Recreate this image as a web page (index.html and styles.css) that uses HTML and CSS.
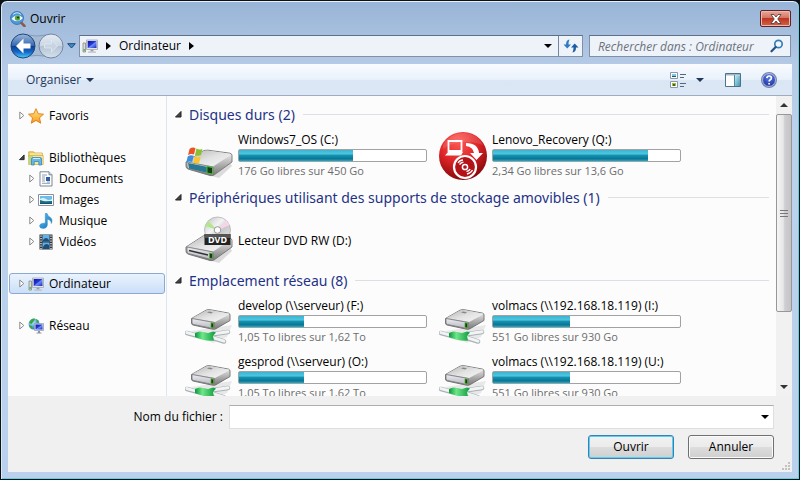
FILE: index.html
```html
<!DOCTYPE html>
<html lang="fr">
<head>
<meta charset="utf-8">
<title>Ouvrir</title>
<link rel="stylesheet" href="styles.css">
</head>
<body>
<svg class="defs" aria-hidden="true">
  <defs>
    <linearGradient id="screen" x1="0" y1="0" x2="1" y2="1"><stop offset="0" stop-color="#0a14a0"/><stop offset=".45" stop-color="#2438d8"/><stop offset=".55" stop-color="#6f8cf5"/><stop offset="1" stop-color="#1a28c0"/></linearGradient>
    <linearGradient id="star" x1="0" y1="0" x2="0" y2="1"><stop offset="0" stop-color="#ffe88a"/><stop offset="1" stop-color="#f79a1c"/></linearGradient>
    <linearGradient id="note" x1="0" y1="0" x2="1" y2="1"><stop offset="0" stop-color="#5cc0f0"/><stop offset="1" stop-color="#1470bc"/></linearGradient>
    <linearGradient id="drivetop" x1="0" y1="0" x2="1" y2="1"><stop offset="0" stop-color="#b4b4b4"/><stop offset=".5" stop-color="#e2e2e2"/><stop offset="1" stop-color="#f8f8f8"/></linearGradient>
    <linearGradient id="driveside" x1="0" y1="0" x2="0" y2="1"><stop offset="0" stop-color="#fafafa"/><stop offset="1" stop-color="#777"/></linearGradient>
    <linearGradient id="drivefront" x1="0" y1="0" x2="0" y2="1"><stop offset="0" stop-color="#eceef4"/><stop offset="1" stop-color="#b5b5bd"/></linearGradient>
    <linearGradient id="cable" x1="0" y1="0" x2="1" y2="0"><stop offset="0" stop-color="#08983a"/><stop offset=".35" stop-color="#6fe68a"/><stop offset="1" stop-color="#0a9a3c"/></linearGradient>
    <linearGradient id="disc" x1="0" y1="0" x2="1" y2="1"><stop offset="0" stop-color="#bdbdbd"/><stop offset=".4" stop-color="#f4f4f4"/><stop offset=".6" stop-color="#c9c9c9"/><stop offset="1" stop-color="#e9e9e9"/></linearGradient>
    <linearGradient id="pane" x1="0" y1="0" x2="1" y2="1"><stop offset="0" stop-color="#bfe8f0"/><stop offset="1" stop-color="#4496b4"/></linearGradient>
    <radialGradient id="red" cx=".4" cy=".2" r=".85"><stop offset="0" stop-color="#ff5a55"/><stop offset=".5" stop-color="#dd2427"/><stop offset="1" stop-color="#7a0608"/></radialGradient>
    <radialGradient id="help" cx=".5" cy=".3" r=".8"><stop offset="0" stop-color="#5a7ee8"/><stop offset="1" stop-color="#10208c"/></radialGradient>
    <radialGradient id="globe" cx=".35" cy=".3" r=".8"><stop offset="0" stop-color="#b8f0ff"/><stop offset="1" stop-color="#1468b8"/></radialGradient>
    <linearGradient id="navblue" x1="0" y1="0" x2="0" y2="1"><stop offset="0" stop-color="#9db8dc"/><stop offset=".48" stop-color="#3468b0"/><stop offset=".5" stop-color="#0c3c8c"/><stop offset=".75" stop-color="#1468c8"/><stop offset="1" stop-color="#48d0ff"/></linearGradient>
    <linearGradient id="navgrey" x1="0" y1="0" x2="0" y2="1"><stop offset="0" stop-color="#e4ebf4"/><stop offset=".48" stop-color="#ccd7e4"/><stop offset=".5" stop-color="#b3c2d3"/><stop offset="1" stop-color="#d6e1ec"/></linearGradient>
  </defs>
  <symbol id="i-closed" viewBox="0 0 6 9"><path d="M.8 1v7l4-3.500z" fill="#fff" stroke="#8a8a8a"/></symbol>
  <symbol id="i-opened" viewBox="0 0 7 7"><path d="M6 .5V6H.5z" fill="#444" stroke="#222"/></symbol>
  <symbol id="i-down" viewBox="0 0 8 4"><path d="M0 0h8L4 4z" fill="currentColor"/></symbol>
  <symbol id="i-right" viewBox="0 0 5 8"><path d="M0 0v8l5-4z" fill="#000"/></symbol>
  <symbol id="i-computer" viewBox="0 0 16 16">
    <path d="M1 5h2.500v9H1z" fill="#d8dcd4" stroke="#858a85" stroke-width=".8"/><path d="M1.400 11h1.500v2H1.400z" fill="#5cb84a"/>
    <path d="M4.500 2h11v9.500h-11z" fill="#e0e4ea" stroke="#a3a8b2" stroke-width=".8"/><path d="M5.700 3h8.800v7H5.700z" fill="url(#screen)"/>
    <path d="M8.500 11.800h3v1.700h-3z" fill="#9aa0a8"/><path d="M6 13.500h8v1.200H6z" fill="#b9bec6"/>
  </symbol>
  <symbol id="i-star" viewBox="0 0 16 16"><path d="M8 .7l2.200 5 5.300.5-4 3.600 1.200 5.400L8 12.400l-4.700 2.800 1.200-5.400-4-3.600 5.300-.5z" fill="url(#star)" stroke="#dc7a10" stroke-width=".9"/></symbol>
  <symbol id="i-library" viewBox="0 0 16 16">
    <path d="M.7 3V1.800h5l1 1.200h7.600v4H.7z" fill="#f0d064" stroke="#c79f35" stroke-width=".7"/><path d="M2 4h12" stroke="#fff5bf"/>
    <path d="M.6 5.500h14.600v9H.6z" fill="#f7e69b" stroke="#cfae4a" stroke-width=".7"/><path d="M1 6h4v8H1z" fill="#b9d77c"/>
    <path d="M3.500 15V9q0-1.500 1.500-1.500h7q1.500 0 1.500 1.500v6h-2.700v-3.500H6.200V15z" fill="#6ab8e6" stroke="#3586bc" stroke-width=".8"/><path d="M5 8.500h7" stroke="#cdecff"/>
  </symbol>
  <symbol id="i-doc" viewBox="0 0 16 16">
    <path d="M2 .8h9l3 3V15H2z" fill="#fff" stroke="#7c8691"/><path d="M11 .8v3h3" fill="#dce3ea" stroke="#7c8691"/>
    <path d="M4 4h5M4 6h3M4 8h3M4 10h3M4 12.300h8M9 11h3" stroke="#8a9db5"/><path d="M8 6h4v4H8z" fill="#2f5ca8"/>
  </symbol>
  <symbol id="i-image" viewBox="0 0 16 16">
    <path d="M.5 2.500h15v11H.5z" fill="#fff" stroke="#8793a0"/><path d="M2 4h12v8H2z" fill="#6dbbe8"/><path d="M2 7q3-2 6 0t6 0v2H2z" fill="#d7f1fb"/><path d="M2 8l5 1.500L14 9v3H2z" fill="#1c7070"/><path d="M2 11h12v1H2z" fill="#174a8c"/>
  </symbol>
  <symbol id="i-music" viewBox="0 0 16 16"><path d="M7.300.5h1.800q.4 2.500 3 3.800 3 2 1.200 6.200.2-3.400-4-4.500v6.200q-.4 3-4 3.200-3.600 0-3.700-2.500.4-3 5.700-2.700z" fill="url(#note)" stroke="#2a82bd" stroke-width=".5"/></symbol>
  <symbol id="i-video" viewBox="0 0 16 16">
    <path d="M1.500.5h13v15h-13z" fill="#30363c"/><path d="M4.500 1h7v6.500h-7zM4.500 8.500h7v6.500h-7z" fill="#62b2e5"/><path d="M5 6q3-4 6 0v1.500H5zM5 13q2-5 6-2v4H5z" fill="#1e4e78"/>
    <path d="M3 1.500v14M13 1.500v14" stroke="#f5f5f5" stroke-width="1.300" stroke-dasharray="1.300 1.200"/>
  </symbol>
  <symbol id="i-network" viewBox="0 0 16 16">
    <circle cx="6" cy="6" r="5.500" fill="url(#globe)"/><path d="M2 3q2-3 5-2.300L6 3 3.500 6 1 5zM1 7l3 1 1 3-3-1zM8 1l3 2-2 2z" fill="#3ba545"/>
    <path d="M6.500 5.500h9v7h-9z" fill="#d9e0ea" stroke="#8c9ab2" stroke-width=".7"/><path d="M7.500 6.500h7v5h-7z" fill="url(#screen)"/><path d="M10 13h2v1.500h-2zM8.500 14.500h5v1h-5z" fill="#8d939c"/>
  </symbol>
  <symbol id="drive" viewBox="0 0 48 34">
    <path d="M4 25l30 8 13-12-4-7z" fill="#000" opacity=".13"/>
    <path d="M1 17L18 6q2-1 5-.8l22 3q2 .6 2 2.200v6.600L29 30q-2 1-4 .5L3 24q-2-.6-2-3z" fill="url(#driveside)" stroke="#747474" stroke-width=".9"/>
    <path d="M2 16.500L18 6.500q2-1 5-.8l22 3q1.500.6.300 1.600L28 21.500z" fill="url(#drivetop)"/>
    <path d="M2 17l26 5v8L3.500 23.500Q2 23 2 21z" fill="url(#drivefront)" stroke="#777" stroke-width=".8"/>
    <path d="M24.500 23l3 .7v5l-3-.7z" fill="#173d12" stroke="#55a635" stroke-width=".8"/>
  </symbol>
  <symbol id="i-windrive" viewBox="0 0 48 34">
    <use href="#drive" width="48" height="34"/><path d="M3 18l20 4v6L4 23.500z" fill="#2a7792"/><path d="M22 21.500l5.500 1v6.500l-5.500-1z" fill="#143e18" stroke="#4cb83a"/>
    <path d="M4.500 4q3-2.500 6-.8L9 9.500q-3-1.500-6 .8z" fill="#ea5326"/><path d="M11.500 3.500q3 2 6 .2L16 10q-3 1.500-6-.2z" fill="#89bf31"/><path d="M2.700 11.500q3-2.200 6-.7L7.200 17q-3-1.500-6 .7z" fill="#3e8ede"/><path d="M9.700 11.200q3 1.800 6 .2L14.200 17.700q-3 1.600-6-.2z" fill="#f9c52b"/>
  </symbol>
  <symbol id="i-netdrive" viewBox="0 0 48 36">
    <path d="M6 22l22 12 14-6 5-12z" fill="#000" opacity=".08"/>
    <path d="M6.500 9.500L21 1.200q2-.8 4-.5l18.500 3.400q1.500.5 1.500 1.900v5.500L31 19.700q-1.500.9-3.500.5L8 16q-1.500-.4-1.500-2z" fill="url(#driveside)" stroke="#6f6f6f" stroke-width=".9"/>
    <path d="M7.500 9L21 1.600q2-.8 4-.5l18.500 3.400q1.200.5.200 1.200L30 13z" fill="url(#drivetop)"/>
    <path d="M7 9.500L29.500 13.500v6.400L8.500 15.500Q7 15 7 13.500z" fill="url(#drivefront)" stroke="#777" stroke-width=".8"/>
    <path d="M26 13.800l2.600.5v4.600l-2.600-.5z" fill="#173d12" stroke="#55a635" stroke-width=".8"/>
    <path d="M24 2.500l4 .7-2 1.200-4-.8z" fill="#888"/>
    <path d="M2 24l11 3M28 29l11 3.500M29 25l14-2" fill="none" stroke="#a9b0b4" stroke-width="4.500" stroke-linecap="round"/>
    <path d="M2 23.600l11 3M28 28.600l11 3.500M29 24.700l14-2" fill="none" stroke="#f1f4f5" stroke-width="3" stroke-linecap="round"/>
    <path d="M10 24q4-2.500 8-1l5 1 5-1.500 3 1-3 3.500 1 4.500q-10 1-19-3.500z" fill="url(#cable)"/>
  </symbol>
  <symbol id="i-recovery" viewBox="0 0 48 48">
    <circle cx="24" cy="24" r="24" fill="url(#red)"/><path d="M4 13Q12 0 25 1q13 0 19 12-22-8-40 4z" fill="#fff" opacity=".13"/>
    <g fill="none" stroke="#fff"><path d="M9.500 9h13v10h-13z" stroke-width="1.800"/><path d="M9 20l-3 3.500h16l2-3.500z" fill="#fff" stroke="none"/><circle cx="26" cy="35" r="11" stroke-width="2.200" fill="#b31318"/><circle cx="26" cy="35" r="2.600" stroke-width="1.500"/><path d="M19 31q2-3 5-3M20.500 32.500q1.500-2 4-2.300M28 42q4-1 5.500-4M27.500 39.700q2.500-.7 3.700-2.500" stroke-width="1.300"/></g>
    <path d="M27 11q12 0 13 10h4l-6.500 7-6.500-7h4q-1-6-8-7z" fill="#fff"/>
  </symbol>
</svg>

<main class="window">
  <header class="titlebar">
    <svg class="app-icon" viewBox="0 0 16 16"><circle cx="7" cy="7" r="6.500" fill="#4c98dc" stroke="#2a64a8" stroke-width=".7"/><path d="M1.500 8Q7 1 13 7q-5 6-11.500 1z" fill="#f4fbff"/><circle cx="7.500" cy="7" r="2.700" fill="#5ca53c"/><circle cx="8" cy="6.500" r="1.100" fill="#143c20"/><path d="M3 3.500Q7 0 11 3.500" stroke="#c8e8ff" fill="none"/><path d="M11.500 12l3 3" stroke="#865d54" stroke-width="2.500" stroke-linecap="round"/></svg>
    <h1>Ouvrir</h1>
    <button class="close" aria-label="Fermer"><svg viewBox="0 0 12 10"><path d="M1 .5h3L6 3 8 .5h3L7.800 5 11 9.500H8L6 7 4 9.500H1L4.200 5z" fill="#fff" stroke="#4d3434" stroke-width=".8"/></svg></button>
  </header>

  <nav class="navbar" aria-label="Adresse">
    <div class="history">
      <svg class="history-shape" viewBox="0 0 54 26" aria-hidden="true"><path d="M13 1.500q14 3 28 0v23q-14-4-28 0z" fill="#a5bad4" stroke="#849bb9"/></svg>
      <button aria-label="Précédent"><svg viewBox="0 0 26 26"><circle cx="13" cy="13" r="12" fill="url(#navblue)" stroke="#234575"/><path d="M13.500 5.500L6 13l7.500 7.500v-5h7v-5h-7z" fill="#fff"/></svg></button>
      <button aria-label="Suivant"><svg viewBox="0 0 26 26"><circle cx="13" cy="13" r="12" fill="url(#navgrey)" stroke="#7286a0"/><path d="M13.500 7l6 6-6 6v-4h-7v-4h7z" fill="#c8d4e1" stroke="#e2eaf2" stroke-width=".8"/></svg></button>
    </div>
    <button class="recent" aria-label="Pages récentes"><svg viewBox="0 0 9 6"><path d="M.7.700h7.600L4.500 5z" fill="#3c8ed0" stroke="#1d4678"/></svg></button>
    <div class="address">
      <svg class="icon"><use href="#i-computer"/></svg>
      <svg class="crumb-arrow"><use href="#i-right"/></svg>
      <a href="#ordinateur">Ordinateur</a>
      <svg class="crumb-arrow"><use href="#i-right"/></svg>
      <button class="drop" aria-label="Emplacements précédents"><svg><use href="#i-down"/></svg></button>
      <button class="refresh" aria-label="Actualiser"><svg viewBox="0 0 16 16"><path d="M6.500 1.500Q3 2 3 6.500H.5L4.300 10.500 8 6.500H5.500q0-3 1-5z" fill="#2f7cc4"/><path d="M9.500 14.500q3.500-.5 3.500-5h2.500L11.700 5.500 8 9.500h2.500q0 3-1 5z" fill="#1c5ca4"/></svg></button>
    </div>
    <div class="search">
      <input type="search" aria-label="Rechercher" placeholder="Rechercher dans : Ordinateur">
      <svg viewBox="0 0 14 14"><circle cx="8.500" cy="5" r="3.700" fill="#eef7fd" stroke="#377db8" stroke-width="1.700"/><path d="M5.700 8L1.500 12.300" stroke="#294f88" stroke-width="2.200" stroke-linecap="round"/></svg>
    </div>
  </nav>

  <section class="panel">
    <div class="toolbar">
      <button class="organise">Organiser <svg><use href="#i-down"/></svg></button>
      <button class="view" aria-label="Affichage"><svg viewBox="0 0 16 16"><path d="M.5.5h7v6h-7zM.5 9.500h7v6h-7z" fill="#fff" stroke="#8898ad"/><path d="M2 2h4v3H2z" fill="#7cc4e8"/><path d="M2 4h4v1H2z" fill="#205c58"/><path d="M2 11h4v3H2z" fill="#a9b832"/><path d="M3 12h2v2H3z" fill="#3d6420"/><path d="M10 2.500h6M10 5.500h4M10 11.500h6M10 14.500h4" stroke="#55677e"/></svg></button>
      <button class="view-drop" aria-label="Plus d’options"><svg><use href="#i-down"/></svg></button>
      <button class="preview" aria-label="Volet de visualisation"><svg viewBox="0 0 16 14"><path d="M.5.5h15v13H.5z" fill="#fff" stroke="#4f7386"/><path d="M1 1h14v1.500H1z" fill="#9cb6c8"/><path d="M10 2.500h5V13h-5z" fill="url(#pane)"/><path d="M9.500 2v11" stroke="#4f8aa0"/></svg></button>
      <button class="help" aria-label="Aide"><svg viewBox="0 0 16 16"><circle cx="8" cy="8" r="7.300" fill="url(#help)" stroke="#7785b0" stroke-width="1.400"/><circle cx="8" cy="8" r="6.400" fill="none" stroke="#dce5fa" stroke-width=".7"/><path d="M5.800 6.200Q6 4 8.200 4t2.200 2Q10.400 7.200 9 8q-.9.500-.9 1.600M8.100 11v1.500" fill="none" stroke="#fff" stroke-width="1.700"/></svg></button>
    </div>

    <div class="browser">
      <nav class="tree" aria-label="Dossiers">
        <ul>
          <li><a href="#favoris"><svg class="twist"><use href="#i-closed"/></svg><svg class="icon"><use href="#i-star"/></svg>Favoris</a></li>
        </ul>
        <ul>
          <li><a href="#bibliotheques"><svg class="twist"><use href="#i-opened"/></svg><svg class="icon"><use href="#i-library"/></svg>Bibliothèques</a>
            <ul class="children">
              <li><a href="#documents"><svg class="twist"><use href="#i-closed"/></svg><svg class="icon"><use href="#i-doc"/></svg>Documents</a></li>
              <li><a href="#images"><svg class="twist"><use href="#i-closed"/></svg><svg class="icon"><use href="#i-image"/></svg>Images</a></li>
              <li><a href="#musique"><svg class="twist"><use href="#i-closed"/></svg><svg class="icon"><use href="#i-music"/></svg>Musique</a></li>
              <li><a href="#videos"><svg class="twist"><use href="#i-closed"/></svg><svg class="icon"><use href="#i-video"/></svg>Vidéos</a></li>
            </ul>
          </li>
        </ul>
        <ul>
          <li><a class="selected" href="#ordinateur" aria-current="true"><svg class="twist"><use href="#i-closed"/></svg><svg class="icon"><use href="#i-computer"/></svg>Ordinateur</a></li>
        </ul>
        <ul>
          <li><a href="#reseau"><svg class="twist"><use href="#i-closed"/></svg><svg class="icon"><use href="#i-network"/></svg>Réseau</a></li>
        </ul>
      </nav>

      <div class="files" id="ordinateur">
        <h2><svg class="twist"><use href="#i-opened"/></svg>Disques durs (2)</h2>
        <div class="drives">
          <article class="drive"><svg class="pic"><use href="#i-windrive" y="13" height="34"/></svg><div class="info"><h3>Windows7_OS (C:)</h3><div class="gauge"><div class="used" style="width:61%"></div></div><p>176 Go libres sur 450 Go</p></div></article>
          <article class="drive"><svg class="pic"><use href="#i-recovery"/></svg><div class="info"><h3>Lenovo_Recovery (Q:)</h3><div class="gauge"><div class="used" style="width:83%"></div></div><p>2,34 Go libres sur 13,6 Go</p></div></article>
        </div>
        <h2><svg class="twist"><use href="#i-opened"/></svg>Périphériques utilisant des supports de stockage amovibles (1)</h2>
        <div class="drives">
          <article class="drive plain">
            <svg class="pic" viewBox="0 0 48 48">
              <use href="#drive" y="15" width="48" height="34"/><path d="M4 35.500l19 4.500" stroke="#333" stroke-width="1.600"/>
              <circle cx="32.500" cy="15" r="13" fill="url(#disc)" stroke="#a9a9a9" stroke-width=".7"/><path d="M32.500 15L20 11l3-5z" fill="#b2e68d"/><path d="M32.500 15L41 5l4 5z" fill="#f4d6e8"/><circle cx="32.500" cy="15" r="3.300" fill="#fff" stroke="#999"/>
              <path d="M19.500 19h26v11h-26z" fill="#222"/><path d="M19.500 19h26v4h-26z" fill="#555"/>
              <text x="32.500" y="28" text-anchor="middle" class="dvd-text">DVD</text>
            </svg>
            <div class="info"><h3>Lecteur DVD RW (D:)</h3></div>
          </article>
        </div>
        <h2><svg class="twist"><use href="#i-opened"/></svg>Emplacement réseau (8)</h2>
        <div class="drives">
          <article class="drive"><svg class="pic"><use href="#i-netdrive" y="11" height="36"/></svg><div class="info"><h3>develop (\\serveur) (F:)</h3><div class="gauge"><div class="used" style="width:35%"></div></div><p>1,05 To libres sur 1,62 To</p></div></article>
          <article class="drive"><svg class="pic"><use href="#i-netdrive" y="11" height="36"/></svg><div class="info"><h3>volmacs (\\192.168.18.119) (I:)</h3><div class="gauge"><div class="used" style="width:41%"></div></div><p>551 Go libres sur 930 Go</p></div></article>
          <article class="drive"><svg class="pic"><use href="#i-netdrive" y="11" height="36"/></svg><div class="info"><h3>gesprod (\\serveur) (O:)</h3><div class="gauge"><div class="used" style="width:35%"></div></div><p>1,05 To libres sur 1,62 To</p></div></article>
          <article class="drive"><svg class="pic"><use href="#i-netdrive" y="11" height="36"/></svg><div class="info"><h3>volmacs (\\192.168.18.119) (U:)</h3><div class="gauge"><div class="used" style="width:41%"></div></div><p>551 Go libres sur 930 Go</p></div></article>
        </div>
      </div>

      <div class="scrollbar" aria-hidden="true">
        <svg class="arrow" viewBox="0 0 8 4"><path d="M0 4h8L4 0z" fill="#333"/></svg>
        <div class="track"><div class="thumb"><svg viewBox="0 0 8 8"><path d="M0 1.500h8M0 4.500h8M0 7.500h8" stroke="#777"/></svg></div></div>
        <svg class="arrow" viewBox="0 0 8 4"><path d="M0 0h8L4 4z" fill="#333"/></svg>
      </div>
    </div>

    <form class="footer">
      <div class="filename">
        <label for="nom">Nom du fichier :</label>
        <div class="combo"><input id="nom" type="text"><button type="button" aria-label="Fichiers récents"><svg><use href="#i-down"/></svg></button></div>
      </div>
      <div class="actions">
        <button type="button" class="push default">Ouvrir</button>
        <button type="button" class="push">Annuler</button>
      </div>
      <svg class="grip" viewBox="0 0 9 9" aria-hidden="true"><path d="M7 0h2v2H7zM7 3h2v2H7zM7 6h2v2H7zM4 3h2v2H4zM4 6h2v2H4zM1 6h2v2H1z" fill="#c2c2c2"/></svg>
    </form>
  </section>
</main>
</body>
</html>
```
FILE: styles.css
```css
* { box-sizing: border-box; }

body {
  margin: 0;
  background: #0b1218;
  font: 12px/16px "Open Sans", "Noto Sans", sans-serif;
  color: #000;
}

h1, h2, h3, p, ul { margin: 0; padding: 0; font-weight: normal; }
h1, h3 { font-size: 12px; }
ul { list-style: none; }
a { color: inherit; text-decoration: none; }
svg { display: block; flex: none; }
input { font: inherit; min-width: 0; outline: none; }

button {
  display: flex;
  align-items: center;
  justify-content: center;
  padding: 0;
  border: 0;
  background: none;
  font: inherit;
  color: inherit;
}

.defs { position: absolute; width: 0; height: 0; }
.icon { width: 16px; height: 16px; }
.dvd-text { font: bold 9px "Noto Sans", sans-serif; fill: #fff; }

.window {
  display: flex;
  flex-direction: column;
  height: 100vh;
  padding: 0 7px 7px;
  border: 1px solid #0b1218;
  border-radius: 7px 7px 0 0;
  background: linear-gradient(#98b4d6, #b4cae6 64px, #bbd2ec 130px, #b9d1ec);
  box-shadow: inset 0 1px #e8f1fa, inset 1px 0 #dce9f6, inset -1px -1px #5fd0e2;
}

/* title bar */
.titlebar { display: flex; align-items: center; gap: 4px; height: 33px; padding: 2px 1px 0 2px; }
.titlebar h1 { flex: 1; }
.app-icon { width: 16px; height: 16px; }
.close {
  width: 31px;
  height: 17px;
  border: 1px solid #5c2329;
  border-radius: 2px;
  background: linear-gradient(#e9a99a, #d4705f 48%, #bd3520 50%, #d2654a);
  box-shadow: inset 0 0 0 1px #eeb8ac;
}
.close svg { width: 12px; height: 10px; }

/* address and search */
.navbar { display: flex; align-items: center; height: 30px; padding: 0 1px 6px 2px; }
.history { position: relative; display: flex; gap: 2px; }
.history button { position: relative; }
.history button svg { width: 26px; height: 26px; }
.history-shape { position: absolute; inset: 0; width: 54px; height: 26px; }
.recent { width: 15px; height: 22px; }
.recent svg { width: 9px; height: 6px; }
.address, .search {
  display: flex;
  align-items: center;
  height: 22px;
  border: 1px solid #8090a8;
  border-top-color: #5f6f86;
  background: #eef3fa;
}
.address { flex: 1; gap: 8px; padding-left: 2px; }
.crumb-arrow { width: 5px; height: 8px; }
.drop { width: 20px; height: 20px; margin-left: auto; }
.drop svg, .organise svg, .view-drop svg, .combo svg { width: 8px; height: 4px; }
.refresh { width: 24px; height: 20px; margin-left: -8px; border-left: 1px solid #75869f; }
.refresh svg { width: 16px; height: 16px; }
.search { flex: 0 0 202px; margin-left: 6px; padding: 0 6px 0 8px; }
.search input { flex: 1; height: 20px; padding: 0; border: 0; background: none; appearance: none; }
.search input::placeholder { color: #6d727a; font-style: italic; opacity: 1; }
.search svg { width: 14px; height: 14px; }

/* inner panel */
.panel { display: flex; flex: 1; flex-direction: column; min-height: 0; background: #f0f0f0; }
.toolbar {
  display: flex;
  align-items: center;
  height: 32px;
  padding: 0 15px 0 18px;
  border-top: 1px solid #f9fbfe;
  border-bottom: 1px solid #9fadc0;
  background: linear-gradient(#f8fbff, #e9f1fb 48%, #dbe6f5 52%, #dde8f7);
  color: #1e395b;
}
.organise { gap: 5px; margin-right: auto; }
.view svg, .preview svg, .help svg { width: 16px; height: 16px; }
.view-drop { margin-left: 10px; }
.preview { margin-left: 21px; }
.help { margin-left: 20px; }

.browser { display: flex; flex: 1; min-height: 0; background: #fcfcfc; }

/* folder tree */
.tree { display: flex; flex: none; flex-direction: column; gap: 21px; width: 159px; padding: 9px 1px; border-right: 1px solid #dbe6f3; }
.tree a { display: flex; align-items: center; height: 21px; padding-left: 9px; border: 1px solid transparent; border-radius: 3px; }
.tree .twist { width: 6px; height: 9px; margin-right: 3px; }
.tree .icon { margin-right: 5px; }
.tree .children a { padding-left: 19px; }
.tree .selected { border-color: #8ba9d3; background: linear-gradient(#eaf3fd, #cbdff8); }

/* drive list */
.files { flex: 1; min-width: 0; padding: 5px 0 0 8px; overflow: hidden; }
.files h2 { display: flex; align-items: center; height: 27px; margin-right: 7px; color: #1e3287; font: 14px/20px "Noto Sans", "Open Sans", sans-serif; }
.files h2 .twist { width: 7px; height: 7px; margin-right: 7px; }
.files h2::after { content: ""; flex: 1; height: 1px; margin-left: 8px; background: #dcdfe4; }
.drives { display: grid; grid-template-columns: repeat(auto-fill, 254px); grid-auto-rows: 56px; padding-left: 10px; }
.drive { display: flex; gap: 5px; padding: 4px 12px 0 0; }
.pic { width: 48px; height: 48px; }
.info { flex: 1; white-space: nowrap; }
.plain .info { align-self: center; }
.gauge { height: 13px; margin: 1px 0; border: 1px solid #a2a2a2; border-radius: 2px; background: #fff; }
.used { height: 11px; background: linear-gradient(#3fb3cf, #4bc6e0 35%, #1590ae 50%, #0a7593 80%, #1eb0cc); }
.drive p { color: #6d6d6d; font-size: 11px; }

/* scroll bar */
.scrollbar { display: flex; flex: none; flex-direction: column; align-items: center; width: 16px; background: #f1f1f1; }
.arrow { width: 8px; height: 4px; margin: 7px 0; }
.track { flex: 1; align-self: stretch; }
.thumb { display: flex; align-items: center; justify-content: center; height: 75%; border: 1px solid #979797; border-radius: 2px; background: linear-gradient(90deg, #f5f5f5, #e6e6e8 45%, #cfcfd2 55%, #c4c4c8); }
.thumb svg { width: 8px; height: 8px; }

/* file name and actions */
.footer { position: relative; padding: 9px 18px 13px; }
.filename { display: flex; align-items: center; gap: 6px; }
.filename label { flex: 0 0 197px; text-align: right; }
.combo { display: flex; flex: 1; height: 24px; border: 1px solid #dedfe2; border-top-color: #abadb3; background: #fff; }
.combo input { flex: 1; padding: 0 4px; border: 0; background: none; }
.combo button { width: 16px; }
.actions { display: flex; justify-content: flex-end; gap: 14px; margin-top: 6px; }
.push { width: 86px; height: 24px; border: 1px solid #707070; border-radius: 3px; background: linear-gradient(#f2f2f2, #ebebeb 49%, #dddddd 51%, #cfcfcf); box-shadow: inset 0 0 0 1px #fafafa; }
.default { border-color: #3c7fb1; box-shadow: inset 0 0 0 1px #56d1f3; }
.grip { position: absolute; right: 2px; bottom: 1px; width: 9px; height: 9px; }
```
